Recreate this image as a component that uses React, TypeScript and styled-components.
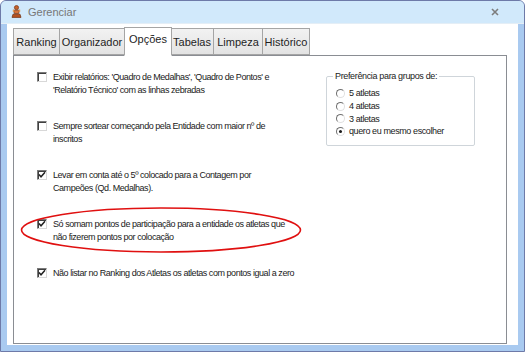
import React from 'react';
import styled, { createGlobalStyle } from 'styled-components';

const GlobalStyle = createGlobalStyle`
	html, body {
		margin: 0;
		padding: 0;
		background: #ffffff;
	}
	* {
		box-sizing: border-box;
	}
`;

const Window = styled.div`
	background: #a9caf0;
	border: 1px solid #6e7aa8;
	border-radius: 6px 6px 0 0;
	display: flex;
	flex-direction: column;
	height: 352px;
	overflow: hidden;
	width: 525px;
`;

const TitleBar = styled.div`
	align-items: center;
	background: #d1e9fb;
	border-bottom: 1px solid #e4eef6;
	display: flex;
	font-family: 'Liberation Sans', Arial, sans-serif;
	height: 23px;
	padding: 0 0 1px 10px;
`;

const TitleText = styled.span`
	color: #767676;
	flex-grow: 1;
	font-size: 11px;
	margin-left: 6px;
`;

const CloseButton = styled.div`
	align-items: center;
	display: flex;
	height: 16px;
	justify-content: center;
	margin-right: 23px;
	width: 12px;
`;

const Client = styled.div`
	background: #ffffff;
	display: flex;
	flex-direction: column;
	flex-grow: 1;
	margin: 0 6px 6px 6px;
	padding: 3px 11px 1px 6px;
`;

const TabStrip = styled.div`
	align-items: flex-end;
	display: flex;
	height: 28px;
	position: relative;
	z-index: 1;
`;

const Tab = styled.div<{ active?: boolean; width: number }>`
	align-items: center;
	background: ${(props) =>
		props.active ? '#ffffff' : 'linear-gradient(#f2f2f2, #e3e3e3)'};
	border: 1px solid #a5a5a5;
	border-bottom: ${(props) => (props.active ? '1px solid #ffffff' : '1px solid #a5a5a5')};
	color: #1e1e1e;
	display: flex;
	font-family: 'Liberation Sans', Arial, sans-serif;
	font-size: 11px;
	height: ${(props) => (props.active ? '29px' : '27px')};
	justify-content: center;
	margin: ${(props) => (props.active ? '0 -1px -1px -1px' : '0 0 0 -1px')};
	padding: ${(props) => (props.active ? '0 4px 5px 4px' : '0 4px')};
	position: relative;
	width: ${(props) => props.width}px;
	z-index: ${(props) => (props.active ? 2 : 1)};
	&:first-child {
		margin-left: 0;
	}
`;

const Panel = styled.div`
	background: #ffffff;
	border: 1px solid #8a8d93;
	display: flex;
	flex-grow: 1;
	font-family: 'Liberation Sans', Arial, sans-serif;
	font-size: 9px;
	gap: 24px;
	padding: 15px 0 0 23px;
	position: relative;
`;

const OptionList = styled.div`
	display: flex;
	flex-direction: column;
	gap: 24px;
	width: 265px;
`;

const OptionRow = styled.label`
	align-items: flex-start;
	color: #1a1a1a;
	display: flex;
	gap: 6px;
	line-height: 12.5px;
	min-height: 25px;
`;

const Box = styled.span<{ checked?: boolean }>`
	align-items: center;
	background: #ffffff;
	border-color: #7a7a7a #d8d8d8 #d8d8d8 #7a7a7a;
	border-style: solid;
	border-width: 1px;
	box-shadow: inset 1px 1px 0 #404040;
	display: flex;
	flex-shrink: 0;
	height: 10px;
	justify-content: center;
	margin-top: 1px;
	width: 10px;
`;

const OptionText = styled.span`
	letter-spacing: -0.45px;
	white-space: nowrap;
`;

const GroupBox = styled.fieldset`
	align-self: flex-start;
	border: 1px solid #cfd5da;
	border-radius: 2px;
	display: flex;
	flex-direction: column;
	height: 75px;
	margin: 0;
	padding: 6px 0 0 9px;
	width: 149px;
`;

const Legend = styled.legend`
	color: #1a1a1a;
	font-size: 9px;
	letter-spacing: -0.35px;
	margin-left: -3px;
	padding: 0 2px;
`;

const RadioRow = styled.label`
	align-items: center;
	color: #1a1a1a;
	display: flex;
	gap: 4px;
	height: 12.7px;
	letter-spacing: -0.4px;
`;

const Radio = styled.span<{ checked?: boolean }>`
	align-items: center;
	background: #ffffff;
	border-color: #707070 #e0e0e0 #e0e0e0 #707070;
	border-radius: 50%;
	border-style: solid;
	border-width: 1px;
	display: flex;
	flex-shrink: 0;
	height: 9px;
	justify-content: center;
	width: 9px;
	&::after {
		background: #1a1a1a;
		border-radius: 50%;
		content: '';
		display: ${(props) => (props.checked ? 'block' : 'none')};
		height: 3px;
		width: 3px;
	}
`;

const Highlight = styled.svg`
	left: 6px;
	pointer-events: none;
	position: absolute;
	top: 150px;
`;

function AppIcon() {
	return (
		<svg width="11" height="13" viewBox="0 0 11 13">
			<circle cx="5.5" cy="2.6" r="2.1" fill="#c4622c" stroke="#7a3512" strokeWidth="0.7" />
			<path d="M2.5 5.2 H8.5 L7.6 8.6 H3.4 Z" fill="#d8743a" stroke="#7a3512" strokeWidth="0.7" />
			<path d="M1 12.4 H10 L9 9.2 H2 Z" fill="#b8521f" stroke="#6b2c0e" strokeWidth="0.7" />
			<rect x="1.8" y="4.6" width="1.4" height="2.2" fill="#e59a55" />
			<rect x="7.8" y="4.6" width="1.4" height="2.2" fill="#e59a55" />
		</svg>
	);
}

function CheckMark() {
	return (
		<svg width="8" height="8" viewBox="0 0 8 8">
			<path d="M1 3.6 L3 5.8 L7 1.2" fill="none" stroke="#222222" strokeWidth="1.5" />
		</svg>
	);
}

const options = [
	{
		checked: false,
		lines: [
			"Exibir relatórios: 'Quadro de Medalhas', 'Quadro de Pontos' e",
			"'Relatório Técnico' com as linhas zebradas",
		],
	},
	{
		checked: false,
		lines: ['Sempre sortear começando pela Entidade com maior nº de', 'inscritos'],
	},
	{
		checked: true,
		lines: ['Levar em conta até o 5º colocado para a Contagem por', 'Campeões (Qd. Medalhas).'],
	},
	{
		checked: true,
		lines: [
			'Só somam pontos de participação para a entidade os atletas que',
			'não fizerem pontos por colocação',
		],
	},
	{
		checked: true,
		lines: ['Não listar no Ranking dos Atletas os atletas com pontos igual a zero'],
	},
];

const tabs = [
	{ label: 'Ranking', width: 47 },
	{ label: 'Organizador', width: 66 },
	{ label: 'Opções', width: 48 },
	{ label: 'Tabelas', width: 44 },
	{ label: 'Limpeza', width: 50 },
	{ label: 'Histórico', width: 48 },
];

const groups = ['5 atletas', '4 atletas', '3 atletas', 'quero eu mesmo escolher'];

export default function App() {
	return (
		<>
			<GlobalStyle />
			<Window>
				<TitleBar>
					<AppIcon />
					<TitleText>Gerenciar</TitleText>
					<CloseButton>
						<svg width="8" height="8" viewBox="0 0 8 8">
							<path d="M1 1 L7 7 M7 1 L1 7" stroke="#7d7d7d" strokeWidth="1.6" />
						</svg>
					</CloseButton>
				</TitleBar>
				<Client>
					<TabStrip>
						{tabs.map((tab) => (
							<Tab key={tab.label} active={tab.label === 'Opções'} width={tab.width}>
								{tab.label}
							</Tab>
						))}
					</TabStrip>
					<Panel>
						<OptionList>
							{options.map((option) => (
								<OptionRow key={option.lines[0]}>
									<Box checked={option.checked}>{option.checked ? <CheckMark /> : null}</Box>
									<OptionText>
										{option.lines.map((line) => (
											<div key={line}>{line}</div>
										))}
									</OptionText>
								</OptionRow>
							))}
						</OptionList>
						<GroupBox>
							<Legend>Preferência para grupos de:</Legend>
							{groups.map((group) => (
								<RadioRow key={group}>
									<Radio checked={group === 'quero eu mesmo escolher'} />
									{group}
								</RadioRow>
							))}
						</GroupBox>
						<Highlight width="282" height="48" viewBox="0 0 282 48">
							<ellipse cx="141" cy="24" rx="139.5" ry="22" fill="none" stroke="#e01010" strokeWidth="1.6" />
						</Highlight>
					</Panel>
				</Client>
			</Window>
		</>
	);
}
